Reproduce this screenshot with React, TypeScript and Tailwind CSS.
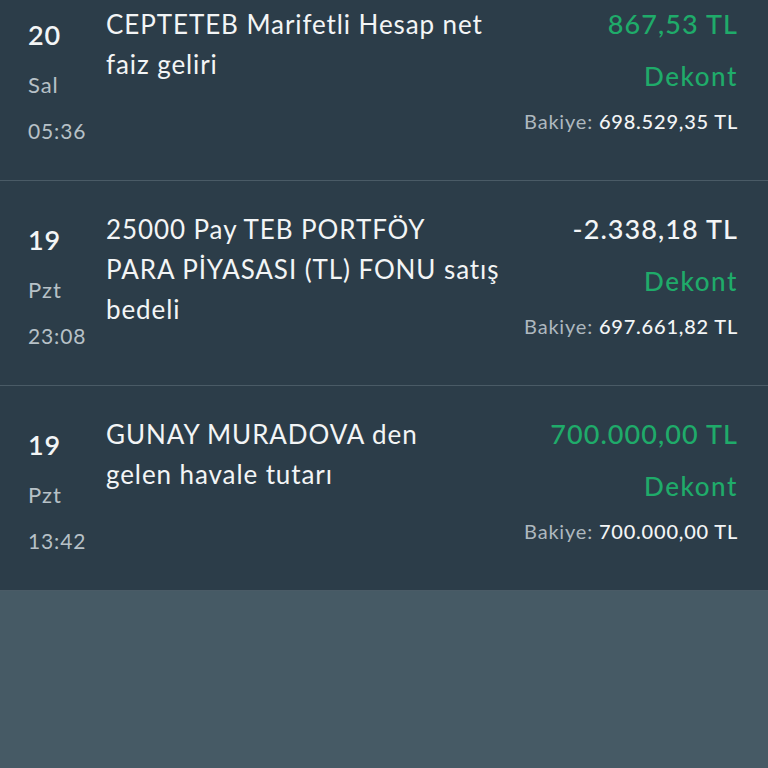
import React from "react";

type Row = {
  day: string;
  dow: string;
  time: string;
  lines: string[];
  amount: string;
  positive: boolean;
  balance: string;
};

const rows: Row[] = [
  {
    day: "20",
    dow: "Sal",
    time: "05:36",
    lines: ["CEPTETEB Marifetli Hesap net", "faiz geliri"],
    amount: "867,53 TL",
    positive: true,
    balance: "698.529,35 TL",
  },
  {
    day: "19",
    dow: "Pzt",
    time: "23:08",
    lines: ["25000 Pay TEB PORTFÖY", "PARA PİYASASI (TL) FONU satış", "bedeli"],
    amount: "-2.338,18 TL",
    positive: false,
    balance: "697.661,82 TL",
  },
  {
    day: "19",
    dow: "Pzt",
    time: "13:42",
    lines: ["GUNAY MURADOVA den", "gelen havale tutarı"],
    amount: "700.000,00 TL",
    positive: true,
    balance: "700.000,00 TL",
  },
];

function TxRow({ r, first }: { r: Row; first: boolean }) {
  return (
    <div
      className={
        "flex h-[205px] border-b border-[#4a5b66] bg-[#2c3d49] " +
        (first ? "-mt-[24px]" : "")
      }
    >
      <div className="w-[106px] shrink-0 pl-[28px] pt-[44px]">
        <div className="text-[27px] leading-[30px] font-semibold tracking-[0.03em] text-[#f3f5f6]">{r.day}</div>
        <div className="mt-[20px] text-[22px] leading-[30px] tracking-[0.04em] text-[#b7c1c7]">{r.dow}</div>
        <div className="mt-[16px] text-[21px] leading-[30px] tracking-[0.04em] text-[#b7c1c7]">{r.time}</div>
      </div>
      <div className="flex-1 pt-[28px] text-[26px] leading-[40px] tracking-[0.035em] text-[#f3f5f6]">
        {r.lines.map((l, i) => (
          <div key={i} className="whitespace-nowrap">
            {l}
          </div>
        ))}
      </div>
      <div className="shrink-0 pr-[30px] pt-[32px] text-right">
        <div
          className={
            "text-[27px] leading-[32px] font-medium tracking-[0.04em] " +
            (r.positive ? "text-[#1fab6a]" : "text-[#f3f5f6]")
          }
        >
          {r.amount}
        </div>
        <div className="mt-[20px] text-[26px] leading-[32px] font-medium tracking-[0.06em] text-[#1fab6a]">Dekont</div>
        <div className="mt-[15px] text-[20px] leading-[28px] tracking-[0.04em]">
          <span className="text-[#aeb8bf]">Bakiye: </span>
          <span className="font-medium text-[#f3f5f6]">{r.balance}</span>
        </div>
      </div>
    </div>
  );
}

export default function App() {
  return (
    <div
      className="flex h-[768px] w-[768px] flex-col overflow-hidden bg-[#465a65]"
      style={{ fontFamily: "Lato, 'Noto Sans', sans-serif" }}
    >
      {rows.map((r, i) => (
        <TxRow key={i} r={r} first={i === 0} />
      ))}
    </div>
  );
}
